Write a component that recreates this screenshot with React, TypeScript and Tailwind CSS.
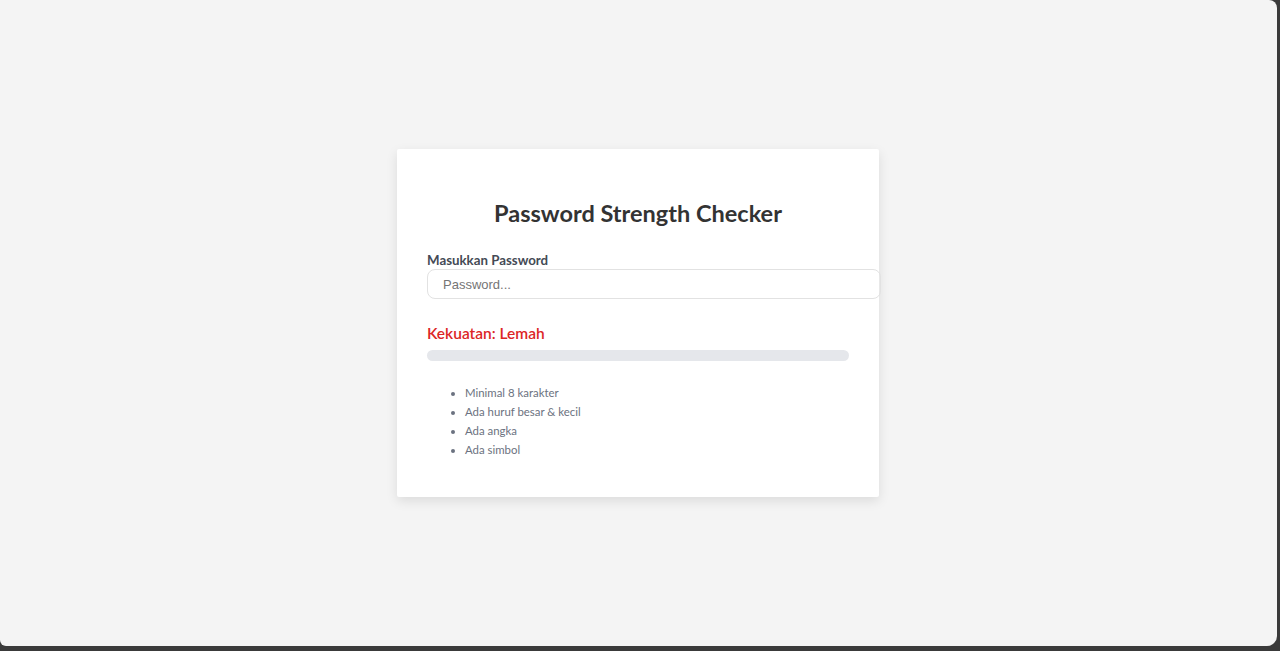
import React, { useState } from 'react';

const rules = ['Minimal 8 karakter', 'Ada huruf besar & kecil', 'Ada angka', 'Ada simbol'];

const App: React.FC = () => {
  const [password, setPassword] = useState('');

  return (
    <div className="h-[651px] w-full bg-[#3a3a3a] overflow-hidden">
      <div className="h-[646px] w-[1277px] bg-[#f4f4f4] rounded-tr-[8px] rounded-br-[10px] rounded-bl-[6px] flex items-center justify-center">
        <div
          className="w-[482px] h-[348px] bg-white rounded-[2px] shadow-[0_4px_12px_rgba(0,0,0,0.1)] px-[30px] pt-[50px] ml-[-1px]"
          style={{ fontFamily: 'Lato, "Open Sans", sans-serif' }}
        >
          <h2 className="text-center text-[23.5px] font-bold text-[#333] leading-[28px]">Password Strength Checker</h2>

          <label className="block mt-[25px] text-[13.3px] font-bold text-[#444a55] leading-[16px]">Masukkan Password</label>
          <input
            type="password"
            value={password}
            onChange={(e) => setPassword(e.target.value)}
            placeholder="Password..."
            className="box-content w-full h-[28px] mt-[1px] px-[15px] border border-[#e2e2e2] rounded-[8px] text-[13px] text-[#333] placeholder:text-[#757575] outline-none"
            style={{ fontFamily: '"Liberation Sans", Arial, sans-serif' }}
          />

          <p className="mt-[24px] text-[15.5px] font-semibold text-[#dc2626] leading-[20px]">Kekuatan: Lemah</p>
          <div className="mt-[7px] h-[11px] w-full rounded-full bg-[#e5e7eb]"></div>

          <ul className="mt-[22px] pl-[38px] list-disc text-[11.4px] text-[#6b7280] leading-[19px] marker:text-[#6b7280]">
            {rules.map((r) => (
              <li key={r}>{r}</li>
            ))}
          </ul>
        </div>
      </div>
    </div>
  );
};

export default App;
